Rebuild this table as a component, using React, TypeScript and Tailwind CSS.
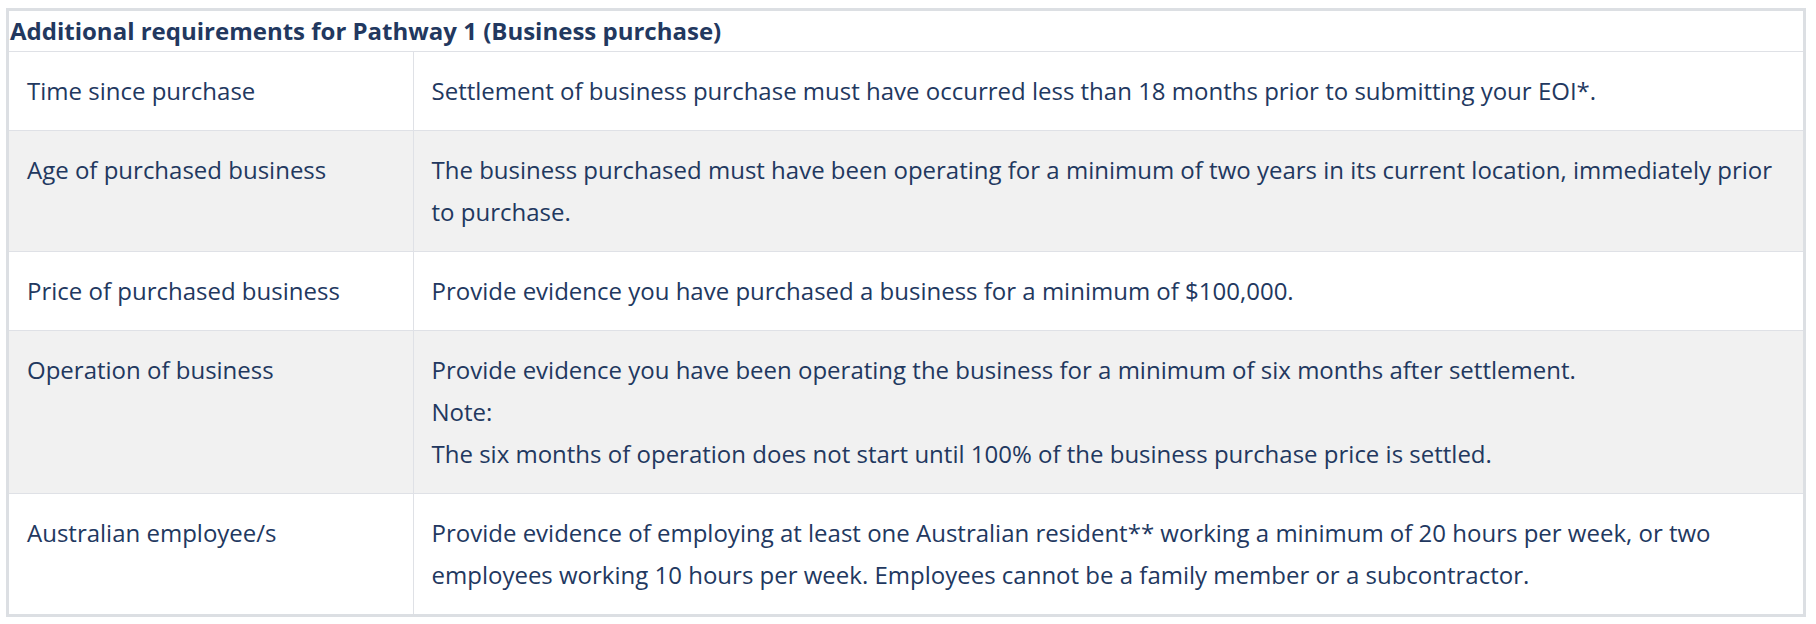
const rows: { label: string; lines: string[]; shaded: boolean }[] = [
  {
    label: "Time since purchase",
    lines: [
      "Settlement of business purchase must have occurred less than 18 months prior to submitting your EOI*.",
    ],
    shaded: false,
  },
  {
    label: "Age of purchased business",
    lines: [
      "The business purchased must have been operating for a minimum of two years in its current location, immediately prior to purchase.",
    ],
    shaded: true,
  },
  {
    label: "Price of purchased business",
    lines: ["Provide evidence you have purchased a business for a minimum of $100,000."],
    shaded: false,
  },
  {
    label: "Operation of business",
    lines: [
      "Provide evidence you have been operating the business for a minimum of six months after settlement.",
      "Note:",
      "The six months of operation does not start until 100% of the business purchase price is settled.",
    ],
    shaded: true,
  },
  {
    label: "Australian employee/s",
    lines: [
      "Provide evidence of employing at least one Australian resident** working a minimum of 20 hours per week, or two employees working 10 hours per week. Employees cannot be a family member or a subcontractor.",
    ],
    shaded: false,
  },
];

export default function App() {
  return (
    <div className="bg-white w-[1816px] h-[624px] pt-[8px] pl-[6px] font-['Open_Sans',sans-serif] text-[#22385f]">
      <div className="w-[1800px] border-[3px] border-[#dcdfe3]">
        <table className="w-full border-collapse">
          <thead>
            <tr className="border-b border-[#dfe1e6]">
              <th
                colSpan={2}
                className="h-[40px] px-[1px] text-left align-middle text-[24px] font-bold leading-[40px]"
              >
                Additional requirements for Pathway 1 (Business purchase)
              </th>
            </tr>
          </thead>
          <tbody>
            {rows.map((row) => (
              <tr
                key={row.label}
                className={
                  "border-b border-[#dfe1e6] last:border-b-0 " +
                  (row.shaded ? "bg-[#f1f1f1]" : "bg-white")
                }
              >
                <td className="w-[404px] border-r border-[#dfe1e6] px-[18px] py-[18px] align-top text-[24px] leading-[42px]">
                  {row.label}
                </td>
                <td className="px-[18px] py-[18px] align-top text-[24px] leading-[42px]">
                  {row.lines.map((line) => (
                    <div key={line}>{line}</div>
                  ))}
                </td>
              </tr>
            ))}
          </tbody>
        </table>
      </div>
    </div>
  );
}
